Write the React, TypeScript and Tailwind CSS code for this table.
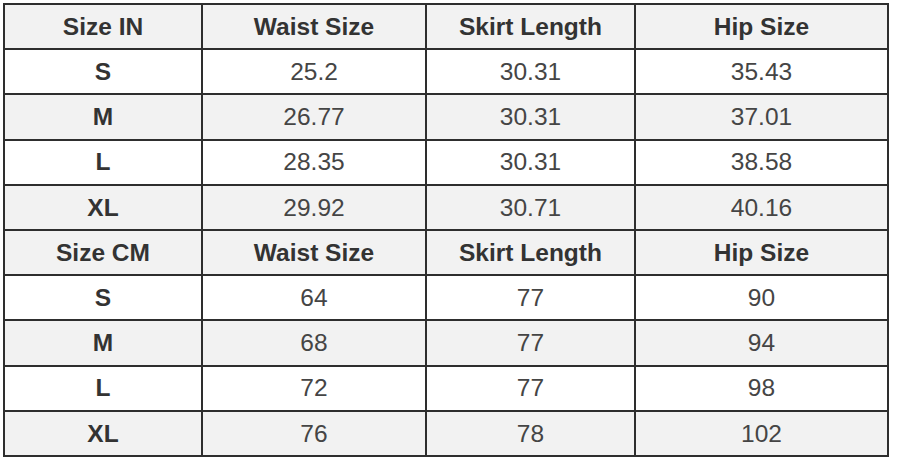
import React from 'react';

type Section = {
  label: string;
  rows: [string, string, string, string][];
};

const sections: Section[] = [
  {
    label: 'Size IN',
    rows: [
      ['S', '25.2', '30.31', '35.43'],
      ['M', '26.77', '30.31', '37.01'],
      ['L', '28.35', '30.31', '38.58'],
      ['XL', '29.92', '30.71', '40.16'],
    ],
  },
  {
    label: 'Size CM',
    rows: [
      ['S', '64', '77', '90'],
      ['M', '68', '77', '94'],
      ['L', '72', '77', '98'],
      ['XL', '76', '78', '102'],
    ],
  },
];

function Cell({ children, bold = false, shaded = false }: { children: React.ReactNode; bold?: boolean; shaded?: boolean }) {
  return (
    <div
      className={`flex items-center justify-center pt-px text-[24.5px] leading-none ${
        bold ? 'font-bold text-[#333]' : 'font-normal text-[#454545]'
      } ${shaded ? 'bg-[#f2f2f2]' : 'bg-white'}`}
    >
      {children}
    </div>
  );
}

export default function App() {
  return (
    <div className="w-[898px] h-[461px] bg-white pt-[3px] pl-[3px] font-['Liberation_Sans',Arial,sans-serif]">
      <div className="grid grid-cols-[196px_222px_207px_251px] grid-rows-10 gap-[2px] p-[2px] w-[886px] h-[454px] bg-[#2e2e2e]">
        {sections.map((section) => (
          <React.Fragment key={section.label}>
            <Cell bold shaded>{section.label}</Cell>
            <Cell bold shaded>Waist Size</Cell>
            <Cell bold shaded>Skirt Length</Cell>
            <Cell bold shaded>Hip Size</Cell>
            {section.rows.map((row, i) => (
              <React.Fragment key={row[0]}>
                <Cell bold shaded={i % 2 === 1}>{row[0]}</Cell>
                <Cell shaded={i % 2 === 1}>{row[1]}</Cell>
                <Cell shaded={i % 2 === 1}>{row[2]}</Cell>
                <Cell shaded={i % 2 === 1}>{row[3]}</Cell>
              </React.Fragment>
            ))}
          </React.Fragment>
        ))}
      </div>
    </div>
  );
}
